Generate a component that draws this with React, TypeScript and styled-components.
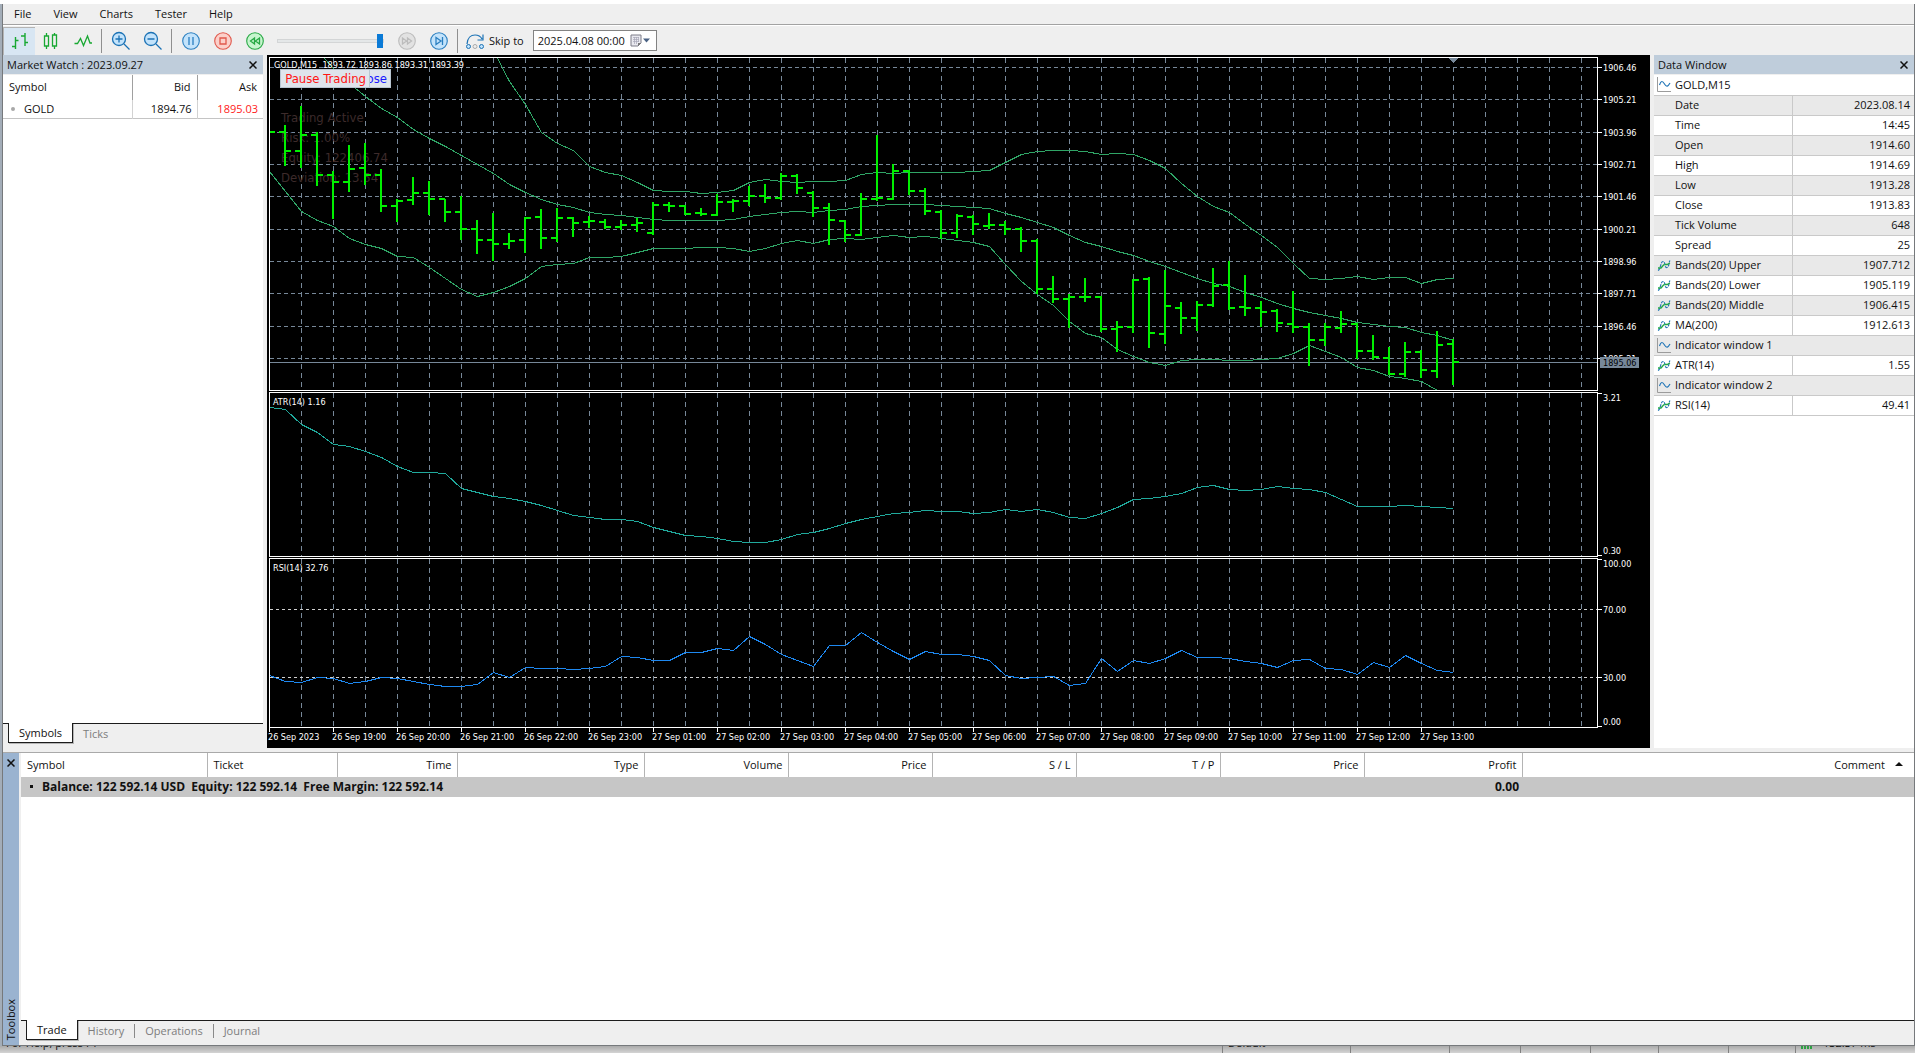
import React from "react";
import styled, { createGlobalStyle, css } from "styled-components";

const UI = `"Open Sans", "Noto Sans", sans-serif`;
const CHART = `"DejaVu Sans Condensed", "DejaVu Sans", sans-serif`;

const GlobalStyle = createGlobalStyle`
  *, *::before, *::after { box-sizing: border-box; }
  body { margin: 0; background: #efefef; font: 11px/16px ${UI}; color: #111; }
  button, input { font: inherit; color: inherit; }
  button { background: none; border: 0; padding: 0; }
  svg { display: block; }
  table { border-collapse: collapse; }
  th { font-weight: 400; }
`;

/* ---------- window shell ---------- */

const Page = styled.div`
  display: flex;
  flex-direction: column;
  height: 100vh;
  min-height: 900px;
  overflow: hidden;
  background: #a3adb8;
`;
const TopEdge = styled.div`
  flex: 0 0 4px;
  background: #fff;
`;
const Frame = styled.div`
  flex: 1;
  min-height: 0;
  display: flex;
  flex-direction: column;
  margin-left: 2px;
  background: #efefef;
  border: solid #76797c;
  border-width: 0 1px 1px;
`;

/* ---------- menu and toolbar ---------- */

const MenuBar = styled.nav`
  display: flex;
  height: 22px;
  border-bottom: 1px solid #fff;
  box-shadow: inset 0 -1px #a2a2a2;
`;
const MenuItem = styled.button`
  height: 20px;
  padding: 0 11px;
`;
const ToolBar = styled.div`
  display: flex;
  align-items: center;
  height: 29px;
`;
const ToolButton = styled.button<{ $on?: boolean }>`
  display: flex;
  align-items: center;
  justify-content: center;
  width: 32px;
  height: 28px;
  ${(p) =>
    p.$on &&
    css`
      background: #d8e6f3;
      border: solid #b4b4b4;
      border-width: 1px 0 0 1px;
    `}
`;
const Divider = styled.span`
  width: 1px;
  height: 24px;
  margin: 0 3px 0 2px;
  background: #8f8f8f;
`;
const Speed = styled.input`
  appearance: none;
  width: 107px;
  height: 16px;
  margin: 0 7px 0 6px;
  background: none;
  &::-webkit-slider-runnable-track {
    height: 4px;
    background: #e4e7e8;
    border: 1px solid #d3d5d6;
  }
  &::-webkit-slider-thumb {
    appearance: none;
    width: 6px;
    height: 14px;
    margin-top: -6px;
    background: #0a7ad6;
  }
`;
const SkipLabel = styled.label`
  display: flex;
  align-items: center;
  gap: 4px;
  margin: 0 9px 0 4px;
`;
const DateBox = styled.div`
  display: flex;
  align-items: center;
  width: 124px;
  height: 21px;
  padding: 0 6px 0 4px;
  background: #fff;
  border: 1px solid #838383;
`;
const DateInput = styled.input`
  flex: 1;
  min-width: 0;
  padding: 0;
  border: 0;
  outline: 0;
  background: none;
`;

/* ---------- docked panels ---------- */

const Workspace = styled.main`
  display: grid;
  grid-template-columns: 260px minmax(0, 1fr) 260px;
  column-gap: 4px;
  padding-bottom: 4px;
`;
const Panel = styled.section`
  display: flex;
  flex-direction: column;
  min-width: 0;
`;
const PanelHead = styled.header`
  display: flex;
  align-items: center;
  justify-content: space-between;
  height: 19px;
  padding: 0 6px 0 4px;
  background: #bfcddb;
`;
const PanelTitle = styled.h2`
  margin: 0;
  font: inherit;
`;
const PanelBody = styled.div`
  flex: 1;
  margin-top: 1px;
  background: #fff;
`;
const WatchTable = styled.table`
  width: 100%;
  table-layout: fixed;
  border-bottom: 1px solid #c4c4c4;
  th, td { padding: 0 5px; text-align: right; }
  th { height: 25px; padding: 0 6px 2px; }
  td { height: 18px; }
  th:first-child, td:first-child { text-align: left; }
  th + th { border-left: 1px solid #a0a0a0; }
  td + td { border-left: 1px solid #d2d2d2; }
`;
const Dot = styled.span`
  display: inline-block;
  width: 4px;
  height: 4px;
  margin: 0 9px 2px 3px;
  border-radius: 50%;
  background: #a8a8a8;
`;
const AskCell = styled.td`
  color: #ff1a1a;
`;

const TabStrip = styled.div`
  display: flex;
  align-items: flex-start;
  height: 25px;
  padding-left: 5px;
  border-top: 1px solid #1c1c1c;
  background: #efefef;
`;
const Tab = styled.button<{ $on?: boolean }>`
  height: 20px;
  padding: 0 10px;
  color: #7d7d7d;
  ${(p) =>
    p.$on &&
    css`
      margin-top: -1px;
      color: #111;
      background: #fff;
      border: solid #1c1c1c;
      border-width: 0 1px 1px;
      box-shadow: 1px 1px #b5b5b5;
    `}
`;
const TabRule = styled.span`
  width: 1px;
  height: 14px;
  margin-top: 3px;
  background: #8a8a8a;
`;

const DataTable = styled.table`
  width: 100%;
  table-layout: fixed;
  td, th {
    height: 20px;
    padding: 0;
    border-bottom: 1px solid #c9c9c9;
    text-align: left;
  }
  td { padding-right: 4px; border-left: 1px solid #c9c9c9; text-align: right; }
  tr:nth-child(even) { background: #e9e9e9; }
`;
const RowLabel = styled.span`
  display: grid;
  grid-template-columns: 18px 1fr;
  align-items: center;
  padding-left: 3px;
`;

/* ---------- chart ---------- */

const ChartBox = styled.section`
  position: relative;
  display: flex;
  flex-direction: column;
  gap: 1px;
  padding: 2px 0 0 2px;
  min-width: 0;
  overflow: hidden;
  background: #000;
`;
const Pane = styled.div`
  display: flex;
`;
const Plot = styled.svg<{ $h: number }>`
  flex: 1;
  min-width: 0;
  height: ${(p) => p.$h}px;
  border: 1px solid #fff;
  shape-rendering: crispEdges;
  font: 9px ${CHART};
`;
const Scale = styled.svg`
  flex: 0 0 52px;
  width: 52px;
  shape-rendering: crispEdges;
  font: 9px ${CHART};
  fill: #fff;
`;
const TimeAxis = styled.svg`
  width: 100%;
  height: 20px;
  margin-top: -1px;
  overflow: visible;
  shape-rendering: crispEdges;
  font: 9px ${CHART};
  fill: #fff;
`;
const ChartButton = styled.button<{ $x: number; $w: number; $color: string }>`
  position: absolute;
  top: 14px;
  left: ${(p) => p.$x}px;
  width: ${(p) => p.$w}px;
  height: 19px;
  background: #dfe4ec;
  border: 1px solid #b9c6d2;
  color: ${(p) => p.$color};
  font: 13px/16px ${CHART};
  text-align: right;
  padding: 0 3px 0 0;
  white-space: nowrap;
`;

// One entry per bar: high, low, open, close, in thirds of a pixel.
const BARS: number[][] = [
  [245, 245, 245, 245], [225, 348, 245, 302], [168, 354, 302, 254], [247, 408, 254, 375], [364, 507, 375, 396],
  [285, 426, 396, 356], [279, 405, 353, 375], [357, 486, 375, 468], [447, 516, 468, 452], [381, 465, 450, 429],
  [393, 495, 429, 447], [447, 516, 447, 486], [438, 570, 486, 537], [510, 612, 537, 570], [489, 634, 570, 582],
  [549, 597, 582, 573], [501, 608, 570, 503], [477, 597, 500, 564], [473, 576, 564, 503], [501, 560, 503, 519],
  [497, 533, 516, 513], [507, 537, 516, 531], [509, 540, 531, 525], [503, 546, 525, 519], [456, 555, 549, 465],
  [456, 486, 465, 468], [465, 494, 468, 492], [474, 498, 489, 492], [432, 498, 495, 456], [447, 486, 456, 453],
  [408, 468, 453, 438], [402, 459, 438, 444], [369, 450, 444, 378], [372, 432, 378, 414], [423, 500, 429, 474],
  [459, 585, 474, 510], [510, 576, 513, 555], [429, 558, 555, 447], [255, 453, 447, 444], [342, 450, 447, 363],
  [360, 435, 363, 423], [414, 495, 423, 483], [480, 567, 486, 549], [492, 564, 549, 498], [495, 555, 501, 522],
  [489, 537, 528, 525], [513, 555, 525, 537], [531, 606, 537, 573], [567, 732, 573, 717], [678, 759, 717, 747],
  [732, 834, 747, 741], [684, 756, 741, 741], [738, 846, 741, 837], [813, 906, 837, 831], [687, 850, 831, 690],
  [681, 894, 687, 849], [660, 882, 852, 768], [756, 852, 774, 804], [753, 843, 804, 765], [654, 771, 765, 708],
  [633, 780, 705, 774], [675, 798, 771, 774], [753, 831, 774, 786], [777, 846, 783, 819], [723, 850, 822, 831],
  [819, 948, 831, 870], [819, 888, 870, 831], [783, 850, 834, 822], [819, 927, 822, 903], [855, 930, 903, 921],
  [891, 975, 924, 972], [876, 981, 972, 906], [900, 984, 906, 960], [843, 984, 963, 885], [867, 1005, 882, 937],
];
const UPPER = [0, 95, 163, 247, 279, 302, 348, 367, 376, 397, 421, 424, 424, 430, 428, 421, 398, 388, 394, 398, 394, 394, 391, 374, 367, 370, 367, 367, 367, 367, 364, 361, 337, 314, 305, 301, 301, 305, 314, 310, 313, 332, 354, 400, 438, 468, 487, 523, 556, 592, 640, 685, 688, 685, 679, 688, 682, 682, 700, 688, 685];
const MIDDLE = [0, 54, 100, 138, 175, 202, 238, 264, 290, 316, 343, 370, 402, 426, 449, 463, 473, 487, 493, 496, 502, 508, 511, 511, 511, 511, 508, 499, 493, 488, 484, 487, 481, 478, 470, 466, 463, 463, 463, 466, 469, 472, 475, 490, 502, 517, 532, 556, 577, 590, 604, 617, 635, 650, 668, 686, 699, 709, 727, 742, 760, 775, 787, 796, 805, 817, 823, 829, 833, 848, 857, 871];
const LOWER = [363, 424, 485, 511, 530, 565, 583, 596, 619, 623, 652, 686, 717, 739, 728, 710, 686, 650, 643, 640, 623, 623, 619, 607, 595, 595, 595, 592, 592, 596, 604, 595, 580, 571, 580, 569, 565, 568, 562, 556, 562, 559, 565, 571, 577, 589, 643, 694, 733, 767, 815, 850, 862, 898, 920, 938, 946, 932, 928, 928, 932, 932, 928, 926, 910, 886, 904, 923, 952, 962, 980, 985, 995, 1021];
const ATR = [82, 88, 132, 157, 192, 200, 214, 233, 259, 277, 277, 281, 325, 337, 349, 355, 364, 376, 391, 406, 412, 418, 418, 424, 442, 454, 466, 469, 475, 484, 487, 487, 478, 463, 457, 445, 430, 418, 409, 401, 397, 391, 394, 394, 400, 397, 388, 394, 388, 397, 411, 415, 400, 381, 358, 355, 349, 340, 322, 316, 328, 331, 328, 319, 325, 328, 337, 358, 379, 379, 379, 376, 379, 382, 385];
const RSI = [887, 904, 908, 892, 895, 910, 904, 892, 895, 904, 913, 919, 919, 912, 877, 891, 862, 865, 865, 868, 865, 860, 829, 832, 841, 841, 817, 817, 805, 811, 769, 793, 822, 841, 859, 796, 796, 757, 788, 813, 837, 814, 823, 823, 829, 840, 886, 895, 892, 888, 916, 910, 834, 874, 841, 850, 835, 811, 832, 832, 835, 844, 850, 862, 841, 838, 864, 869, 883, 848, 862, 826, 850, 871, 877];

const STEP = 16;
const barX = (i: number) => i * STEP - 1;
const toY = (v: number, origin: number) => Math.round((v - origin) / 3);
const line = (data: number[], first: number, origin: number) =>
  data.map((v, i) => `${barX(i + first) + 0.5},${Math.floor((v - origin) / 3) + 0.5}`).join(" ");

const GRID_Y = [9, 41, 74, 106, 138, 171, 203, 235, 268, 300];
const PRICES = ["1906.46", "1905.21", "1903.96", "1902.71", "1901.46", "1900.21", "1898.96", "1897.71", "1896.46", "1895.21"];
const TIMES = [
  "26 Sep 2023", "26 Sep 19:00", "26 Sep 20:00", "26 Sep 21:00", "26 Sep 22:00", "26 Sep 23:00", "27 Sep 01:00",
  "27 Sep 02:00", "27 Sep 03:00", "27 Sep 04:00", "27 Sep 05:00", "27 Sep 06:00", "27 Sep 07:00", "27 Sep 08:00",
  "27 Sep 09:00", "27 Sep 10:00", "27 Sep 11:00", "27 Sep 12:00", "27 Sep 13:00",
];
const SLATE = "#778899";

const VGrid = () => (
  <g stroke={SLATE} strokeDasharray="5 4">
    {Array.from({ length: 80 }, (_, i) => (
      <line key={i} x1={31.5 + i * 32} x2={31.5 + i * 32} y1="0" y2="400" />
    ))}
  </g>
);

const BarsShape = () => (
  <g fill="#00f000">
    {BARS.map(([hi, lo, o, c], i) => {
      const x = barX(i);
      const [h, l, oy, cy] = [hi, lo, o, c].map((v) => toY(v, 24));
      return (
        <g key={i}>
          {i > 0 && <rect x={x - 1} y={h} width="2" height={l - h} />}
          {i > 0 && <rect x={x - 6} y={oy - 1} width="6" height="2" />}
          <rect x={x + 1} y={cy - 1} width="5" height="2" />
        </g>
      );
    })}
  </g>
);

const ScaleMark = ({ y, text, ty }: { y: number; text: string; ty?: number }) => (
  <>
    <rect x="0" y={y} width="4" height="1" />
    <text x="5" y={ty ?? y + 4}>{text}</text>
  </>
);

const Chart = () => (
  <ChartBox aria-label="GOLD M15 chart">
    <Pane>
      <Plot $h={334}>
        <VGrid />
        <g stroke={SLATE} strokeDasharray="4 3">
          {GRID_Y.map((y) => <line key={y} x1="0" x2="4000" y1={y + 0.5} y2={y + 0.5} />)}
        </g>
        <line x1="0" x2="4000" y1="304.5" y2="304.5" stroke={SLATE} />
        <g fill="#3d2b2b" fontSize="13">
          <text x="11" y="64">Trading Active</text>
          <text x="11" y="84">Risk: 1.00%</text>
          <text x="11" y="104">Equity: 122406.74</text>
          <text x="11" y="124">Deviation: 13.54</text>
        </g>
        <g fill="none" stroke="#2fa566">
          <polyline points={line(UPPER, 14, 24)} />
          <polyline points={line(MIDDLE, 3, 24)} />
          <polyline points={line(LOWER, 0, 24)} />
        </g>
        <BarsShape />
        <path d="M1178 0h10l-5 5z" fill={SLATE} />
        <text x="4" y="10" fill="#fff" xmlSpace="preserve">GOLD,M15  1893.72 1893.86 1893.31 1893.39</text>
      </Plot>
      <Scale height="334">
        {PRICES.map((p, i) => <ScaleMark key={p} y={GRID_Y[i] + 1} text={p} ty={GRID_Y[i] + 5} />)}
        <rect x="2" y="300" width="39" height="11" fill={SLATE} />
        <text x="5" y="309" fill="#000">1895.06</text>
      </Scale>
    </Pane>
    <Pane>
      <Plot $h={165}>
        <VGrid />
        <polyline points={line(ATR, 0, 39)} fill="none" stroke="#20a99c" />
        <text x="3" y="12" fill="#fff">ATR(14) 1.16</text>
      </Plot>
      <Scale height="165">
        <ScaleMark y={1} text="3.21" ty={9} />
        <ScaleMark y={163} text="0.30" ty={162} />
      </Scale>
    </Pane>
    <Pane>
      <Plot $h={170}>
        <VGrid />
        <g stroke="#d0d0d0" strokeDasharray="3 3">
          <line x1="0" x2="4000" y1="50.5" y2="50.5" />
          <line x1="0" x2="4000" y1="118.5" y2="118.5" />
        </g>
        <polyline points={line(RSI, 0, 537)} fill="none" stroke="#1e88f0" />
        <text x="3" y="12" fill="#fff">RSI(14) 32.76</text>
      </Plot>
      <Scale height="170">
        <ScaleMark y={1} text="100.00" ty={9} />
        <ScaleMark y={51} text="70.00" />
        <ScaleMark y={119} text="30.00" />
        <ScaleMark y={168} text="0.00" ty={167} />
      </Scale>
    </Pane>
    <TimeAxis>
      {TIMES.map((t, i) => (
        <g key={t}>
          <rect x={i * 64} y="0" width="1" height="4" />
          <text x={i * 64 - 1} y="12">{t}</text>
        </g>
      ))}
    </TimeAxis>
    <ChartButton $x={83} $w={41} $color="#1a1aff">Close</ChartButton>
    <ChartButton $x={13} $w={90} $color="#ff1414">Pause Trading</ChartButton>
  </ChartBox>
);

/* ---------- icons ---------- */

const Icon = ({ children, w = 20, h = 20 }: { children: React.ReactNode; w?: number; h?: number }) => (
  <svg width={w} height={h} viewBox={`0 0 ${w} ${h}`} fill="none" aria-hidden="true">{children}</svg>
);
const BarsIcon = () => (
  <Icon><path d="M2 15.5h3.500M5.500 18V6M5.500 9.500H8.500M11 5h4M15 2v13M15 11.500h3" stroke="#18a832" strokeWidth="1.400" /></Icon>
);
const CandlesIcon = () => (
  <Icon><path d="M5.500 2v3M5.500 15v3M3.500 5h4v10h-4zM13.500 2v2M13.500 15v3M11.500 4h4v11h-4z" stroke="#18a832" strokeWidth="1.300" /></Icon>
);
const LineIcon = () => (
  <Icon><path d="M1.500 12.500h3l3-5 3 7 4-9.500 2.500 7H19" stroke="#18a832" strokeWidth="1.300" /></Icon>
);
const ZoomIcon = ({ plus }: { plus?: boolean }) => (
  <Icon>
    <circle cx="8" cy="8" r="6.500" fill="#c3e3fb" stroke="#1b72b5" strokeWidth="1.300" />
    <path d={`M4.500 8h7${plus ? "M8 4.500v7" : ""}M13 13l5.500 5.500`} stroke="#1b72b5" strokeWidth="1.300" />
  </Icon>
);
const RoundIcon = ({ fill, stroke, d }: { fill: string; stroke: string; d: string }) => (
  <Icon>
    <circle cx="10" cy="10" r="8.300" fill={fill} stroke={stroke} strokeWidth="1.100" />
    <path d={d} stroke={stroke} strokeWidth="1.300" />
  </Icon>
);
const SkipIcon = () => (
  <Icon>
    <path d="M2 13C2.500 7 6 4 10 4c3 0 5.500 1 7 4M18 3.500V9h-5.500" stroke="#1b72b5" strokeWidth="1.200" />
    <circle cx="3.500" cy="15.500" r="2" fill="#c3e3fb" stroke="#1b72b5" />
    <circle cx="10" cy="15.500" r="2" fill="#eee" stroke="#aaa" />
    <circle cx="16.500" cy="15.500" r="2" fill="#c3e3fb" stroke="#1b72b5" />
  </Icon>
);
const CalendarIcon = () => (
  <Icon w={20} h={13}>
    <path d="M1 1h10v8l-3 3H1z" fill="#e9e9ef" stroke="#7c7c88" />
    <path d="M3 3.500h6M3 5.500h6M3 7.500h6M4.500 3v7M6.500 3v7M8.500 3v5" stroke="#a8a8b8" strokeWidth=".7" />
    <path d="M8 12V9h3z" fill="#777" />
    <path d="M13 4.500h7l-3.500 4z" fill="#4a6284" />
  </Icon>
);
const CloseIcon = () => (
  <Icon w={8} h={8}><path d="M.5.5l7 7M7.500.5l-7 7" stroke="#111" strokeWidth="1.500" /></Icon>
);
const WindowIcon = () => (
  <Icon w={14} h={15}>
    <path d="M.5 0v14.500H14" stroke="#9b9b9b" />
    <path d="M2.500 8C4 3.500 5.500 3.500 7.500 7s3.500 2.500 5.500-1" stroke="#2477b8" strokeWidth="1.200" />
  </Icon>
);
const IndicatorIcon = () => (
  <Icon w={14} h={15}>
    <path d="M1 12.500C4 11 3.500 3.500 6 3.500s1.500 7 4 6 1.500-5 3-7" stroke="#2477b8" strokeWidth="1.200" strokeDasharray="3 1" />
    <path d="M1 10h3l3-3.500M7.500 6.500h2.500L13 5" stroke="#22a845" strokeWidth="1.300" />
  </Icon>
);

/* ---------- toolbox ---------- */

const Toolbox = styled.section`
  flex: 1;
  min-height: 0;
  display: flex;
  border-top: 1px solid #a9a9a9;
`;
const SideBar = styled.div`
  display: flex;
  flex-direction: column;
  align-items: center;
  justify-content: space-between;
  width: 16px;
  padding: 6px 0 5px;
  margin-right: 2px;
  background: #9ab3d0;
`;
const SideTitle = styled.h2`
  margin: 0;
  font: inherit;
  line-height: 16px;
  writing-mode: vertical-rl;
  transform: rotate(180deg);
`;
const ToolboxMain = styled.div`
  flex: 1;
  min-width: 0;
  display: flex;
  flex-direction: column;
`;
const TradeArea = styled.div`
  flex: 1;
  background: #fff;
`;
const TradeTable = styled.table`
  width: 100%;
  table-layout: fixed;
  th { height: 24px; padding: 0 5px 0 7px; text-align: right; }
  th:nth-child(-n + 2) { text-align: left; padding-left: 6px; }
  th + th { border-left: 1px solid #b4b4b4; }
  td {
    height: 20px;
    padding: 0 3px;
    background: #c6c6c6;
    font-size: 12px;
    font-weight: 700;
    text-align: right;
    white-space: pre;
  }
  td:first-child { text-align: left; padding-left: 9px; }
`;
const Bullet = styled.span`
  display: inline-block;
  width: 3px;
  height: 3px;
  margin: 0 9px 3px 0;
  background: #111;
`;
const SortArrow = styled.span`
  display: inline-block;
  margin: 0 6px 3px 10px;
  border: solid transparent;
  border-width: 0 4px 4px;
  border-bottom-color: #111;
`;

/* ---------- status bar of the window behind ---------- */

const StatusBar = styled.footer`
  display: flex;
  align-items: flex-end;
  height: 7px;
  padding-left: 1px;
  overflow: hidden;
  background: linear-gradient(#aaa, #d4d4d4);
`;
const StatusCell = styled.span<{ $w?: number }>`
  flex: ${(p) => (p.$w ? `0 0 ${p.$w}px` : "1")};
  display: flex;
  align-items: flex-end;
  gap: 10px;
  height: 18px;
  padding: 0 5px;
  white-space: nowrap;
  & + & { border-left: 1px solid #808080; }
  & > span { height: 18px; }
`;
const Signal = styled.i`
  width: 12px;
  height: 14px;
  margin-bottom: 4px;
  background: repeating-linear-gradient(90deg, #2ea043 0 2px, transparent 2px 3px);
`;

const DATA: [string, string | null, "win" | "ind" | null][] = [
  ["GOLD,M15", null, "win"], ["Date", "2023.08.14", null], ["Time", "14:45", null], ["Open", "1914.60", null],
  ["High", "1914.69", null], ["Low", "1913.28", null], ["Close", "1913.83", null], ["Tick Volume", "648", null],
  ["Spread", "25", null], ["Bands(20) Upper", "1907.712", "ind"], ["Bands(20) Lower", "1905.119", "ind"],
  ["Bands(20) Middle", "1906.415", "ind"], ["MA(200)", "1912.613", "ind"], ["Indicator window 1", null, "win"],
  ["ATR(14)", "1.55", "ind"], ["Indicator window 2", null, "win"], ["RSI(14)", "49.41", "ind"],
];
const TRADE_COLS: [string, number?][] = [
  ["Symbol", 186], ["Ticket", 130], ["Time", 120], ["Type", 187], ["Volume", 144], ["Price", 144], ["S / L", 144],
  ["T / P", 144], ["Price", 144], ["Profit", 158], ["Comment"],
];

export default function App() {
  return (
    <Page>
      <GlobalStyle />
      <TopEdge />
      <Frame>
        <MenuBar>
          {["File", "View", "Charts", "Tester", "Help"].map((m) => <MenuItem key={m}>{m}</MenuItem>)}
        </MenuBar>
        <ToolBar role="toolbar">
          <ToolButton $on aria-label="Bar chart"><BarsIcon /></ToolButton>
          <ToolButton aria-label="Candlesticks"><CandlesIcon /></ToolButton>
          <ToolButton aria-label="Line chart"><LineIcon /></ToolButton>
          <Divider />
          <ToolButton aria-label="Zoom in"><ZoomIcon plus /></ToolButton>
          <ToolButton aria-label="Zoom out"><ZoomIcon /></ToolButton>
          <Divider />
          <ToolButton aria-label="Pause"><RoundIcon fill="#c3e3fb" stroke="#2a7fc0" d="M8 6v8M12 6v8" /></ToolButton>
          <ToolButton aria-label="Stop"><RoundIcon fill="#fbd0ca" stroke="#e0584c" d="M7 7h6v6H7z" /></ToolButton>
          <ToolButton aria-label="Rewind"><RoundIcon fill="#c6f5ce" stroke="#27a844" d="M9.500 7v6L5.500 10zM14.500 7v6L10.500 10z" /></ToolButton>
          <Speed type="range" min="0" max="32" defaultValue="32" aria-label="Speed" />
          <ToolButton aria-label="Fast forward"><RoundIcon fill="#e2e2e2" stroke="#bcbcbc" d="M5.500 7v6L9.500 10zM10.500 7v6L14.500 10z" /></ToolButton>
          <ToolButton aria-label="Step"><RoundIcon fill="#c3e3fb" stroke="#2a7fc0" d="M7 6.500v7l5-3.500zM13.500 6v8" /></ToolButton>
          <Divider />
          <SkipLabel htmlFor="skip"><SkipIcon />Skip to</SkipLabel>
          <DateBox>
            <DateInput id="skip" defaultValue="2025.04.08 00:00" />
            <button aria-label="Open calendar"><CalendarIcon /></button>
          </DateBox>
        </ToolBar>
        <Workspace>
          <Panel>
            <PanelHead>
              <PanelTitle>Market Watch : 2023.09.27</PanelTitle>
              <button aria-label="Close Market Watch"><CloseIcon /></button>
            </PanelHead>
            <PanelBody>
              <WatchTable>
                <colgroup><col /><col width="65" /><col width="66" /></colgroup>
                <thead><tr><th>Symbol</th><th>Bid</th><th>Ask</th></tr></thead>
                <tbody><tr><td><Dot />GOLD</td><td>1894.76</td><AskCell>1895.03</AskCell></tr></tbody>
              </WatchTable>
            </PanelBody>
            <TabStrip>
              <Tab $on>Symbols</Tab>
              <Tab>Ticks</Tab>
            </TabStrip>
          </Panel>
          <Chart />
          <Panel>
            <PanelHead>
              <PanelTitle>Data Window</PanelTitle>
              <button aria-label="Close Data Window"><CloseIcon /></button>
            </PanelHead>
            <PanelBody>
              <DataTable>
                <colgroup><col /><col width="121" /></colgroup>
                <tbody>
                  {DATA.map(([name, value, icon]) => (
                    <tr key={name}>
                      <th scope="row" colSpan={value ? 1 : 2}>
                        <RowLabel>
                          <span>{icon === "win" ? <WindowIcon /> : icon === "ind" ? <IndicatorIcon /> : null}</span>
                          {name}
                        </RowLabel>
                      </th>
                      {value && <td>{value}</td>}
                    </tr>
                  ))}
                </tbody>
              </DataTable>
            </PanelBody>
          </Panel>
        </Workspace>
        <Toolbox>
          <SideBar>
            <button aria-label="Close Toolbox"><CloseIcon /></button>
            <SideTitle>Toolbox</SideTitle>
          </SideBar>
          <ToolboxMain>
            <TradeArea>
              <TradeTable>
                <colgroup>{TRADE_COLS.map(([, w], i) => <col key={i} width={w} />)}</colgroup>
                <thead>
                  <tr>
                    {TRADE_COLS.map(([n], i) => <th key={i}>{n}{n === "Comment" && <SortArrow />}</th>)}
                  </tr>
                </thead>
                <tbody>
                  <tr>
                    <td colSpan={9}><Bullet />Balance: 122 592.14 USD  Equity: 122 592.14  Free Margin: 122 592.14</td>
                    <td>0.00</td>
                    <td />
                  </tr>
                </tbody>
              </TradeTable>
            </TradeArea>
            <TabStrip>
              <Tab $on>Trade</Tab>
              <Tab>History</Tab>
              <TabRule />
              <Tab>Operations</Tab>
              <TabRule />
              <Tab>Journal</Tab>
            </TabStrip>
          </ToolboxMain>
        </Toolbox>
      </Frame>
      <StatusBar>
        <StatusCell><span>For Help, press F1</span></StatusCell>
        <StatusCell $w={128}><span>Default</span></StatusCell>
        <StatusCell $w={99} />
        <StatusCell $w={71} />
        <StatusCell $w={70} />
        <StatusCell $w={68} />
        <StatusCell $w={70} />
        <StatusCell $w={67} />
        <StatusCell $w={120}><Signal /><span>132.37 ms</span></StatusCell>
      </StatusBar>
    </Page>
  );
}
